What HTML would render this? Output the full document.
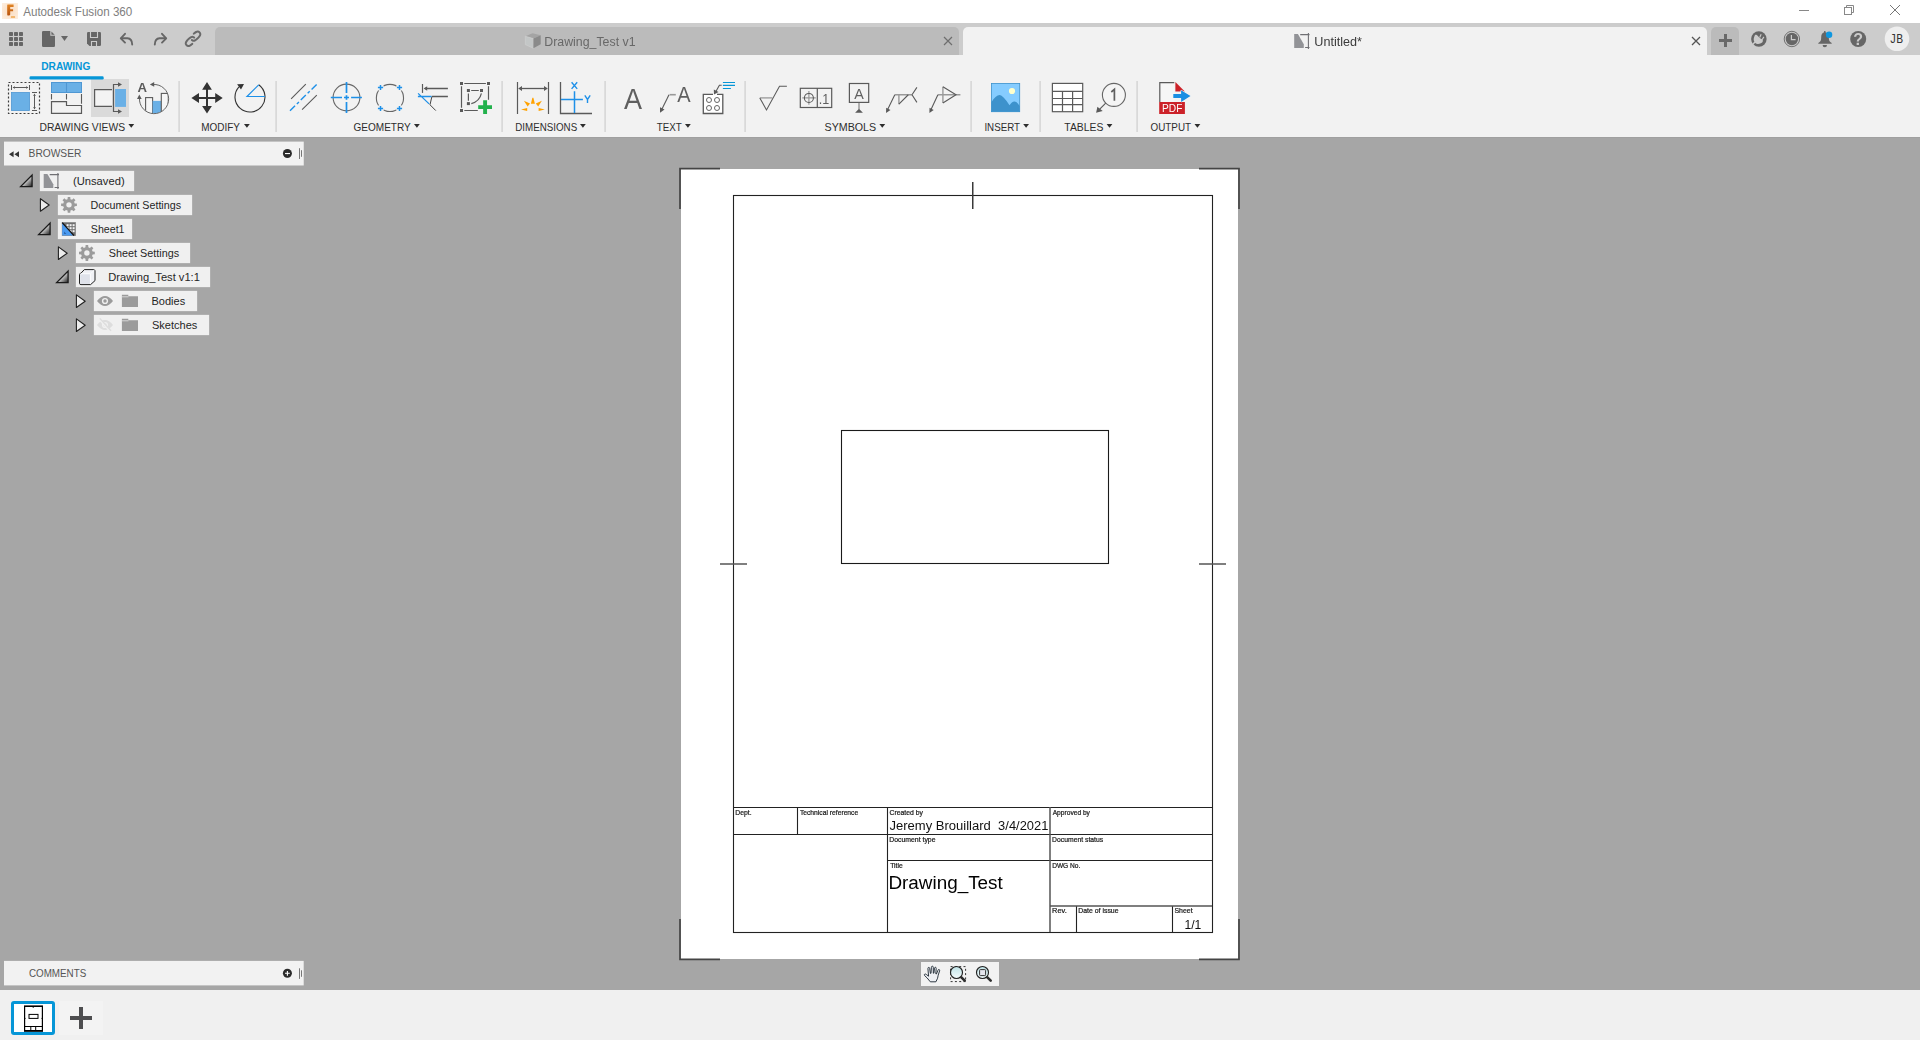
<!DOCTYPE html>
<html><head><meta charset="utf-8"><title>Autodesk Fusion 360</title>
<style>

html,body{margin:0;padding:0;}
body{width:1920px;height:1040px;overflow:hidden;background:#ffffff;position:relative;font-family:"Liberation Sans",sans-serif;}
div{position:absolute;box-sizing:border-box;}
#ov{position:absolute;left:0;top:0;}
#titlebar{left:0;top:0;width:1920px;height:23px;background:#ffffff;}
#tabbar{left:0;top:23px;width:1920px;height:32px;background:#cccccc;}
.tab{top:4px;height:28px;border-radius:5px 5px 0 0;}
#tab1{left:215px;width:744px;background:#bbbbbb;}
#tab2{left:963px;width:744px;background:#f2f2f2;}
#tabplus{left:1711px;width:28px;background:#bbbbbb;}
#avatar{left:1884px;top:4px;width:25px;height:25px;border-radius:50%;background:#f2f2f2;}
#toolbar{left:0;top:55px;width:1920px;height:82px;background:#f2f2f2;}
#tbhl{left:91px;top:24px;width:38px;height:38px;background:#dadada;}
.sep{top:26px;width:2px;height:51px;background:linear-gradient(90deg,#e2e2e2,#d6d6d6);}
#canvas{left:0;top:137px;width:1920px;height:853px;background:#a6a6a6;}
#cshadow{left:0;top:0;width:1920px;height:1px;background:#a0a0a0;}
#sheet{left:681px;top:32px;width:557px;height:790px;background:#ffffff;}
#browser{left:4px;top:5px;width:299px;height:23px;background:#f2f2f2;}
#comments{left:4px;top:824px;width:299px;height:24px;background:#f2f2f2;}
.node{height:20px;background:#f0f0f0;box-shadow:0 0 1px rgba(240,240,240,0.8);}
#navbar{left:921px;top:825px;width:78px;height:24px;background:#f2f2f2;}
#bottombar{left:0;top:990px;width:1920px;height:50px;background:#f0f0f0;}
#thumb{left:11px;top:11px;width:44px;height:34px;border:3px solid #0696d7;border-radius:3px;background:#ffffff;}
#addsheet{left:59px;top:11px;width:44px;height:34px;background:#f3f3f3;}

</style></head>
<body>
<div id="titlebar"></div>
<div id="tabbar"><div class="tab" id="tab1"></div><div class="tab" id="tab2"></div><div class="tab" id="tabplus"></div></div>
<div id="toolbar"><div id="tbhl"></div><div class="sep" style="left:178px"></div><div class="sep" style="left:275px"></div><div class="sep" style="left:501px"></div><div class="sep" style="left:604px"></div><div class="sep" style="left:744px"></div><div class="sep" style="left:970px"></div><div class="sep" style="left:1039px"></div><div class="sep" style="left:1136px"></div></div>
<div id="canvas"><div id="cshadow"></div><div id="sheet"></div><div id="browser"></div><div class="node" style="left:40px;top:34px;width:94px"></div><div class="node" style="left:58px;top:58px;width:134px"></div><div class="node" style="left:58px;top:82px;width:74px"></div><div class="node" style="left:76px;top:106px;width:114px"></div><div class="node" style="left:76px;top:130px;width:134px"></div><div class="node" style="left:94px;top:154px;width:103px"></div><div class="node" style="left:94px;top:178px;width:115px"></div><div id="comments"></div><div id="navbar"></div></div>
<div id="bottombar"><div id="thumb"></div><div id="addsheet"></div></div>

<svg id="ov" width="1920" height="1040" viewBox="0 0 1920 1040">
<g id="sheetlines" fill="none" stroke-linecap="butt">
<path d="M679.2 168.7H720 M680 168V209 M1199 168.7H1239.8 M1239 168V209 M679.2 959.3H720 M680 919V960 M1199 959.3H1239.8 M1239 919V960" stroke="#444444" stroke-width="1.7"/>
<rect x="733.5" y="195.5" width="479" height="737" stroke="#222222" stroke-width="1.1"/>
<path d="M972.75 182V209" stroke="#3a3a3a" stroke-width="1.5"/>
<path d="M720 564H747 M1199 564H1226" stroke="#555555" stroke-width="1.3"/>
<rect x="841.5" y="430.5" width="267" height="133" stroke="#1a1a1a" stroke-width="1.1"/>
<path d="M733 807.5H1212 M733 834.5H1212 M887 860.5H1212 M797.5 807V834 M887.5 807V932 M1076.5 906V932 M1172.5 906V932" stroke="#222222" stroke-width="1.1"/>
<path d="M1050 807V932 M1050 906H1212" stroke="#555555" stroke-width="1.5"/>
</g>
<defs><linearGradient id="gF" x1="0" y1="0" x2="0" y2="1"><stop offset="0" stop-color="#e08424"/><stop offset="1" stop-color="#b8520c"/></linearGradient><linearGradient id="gTri" x1="0" y1="0" x2="1" y2="1"><stop offset="0.42" stop-color="#ececec"/><stop offset="0.95" stop-color="#2e2e2e"/></linearGradient></defs>
<defs><radialGradient id="gLogo" cx="0.5" cy="0.5" r="0.75"><stop offset="0" stop-color="#fbdcbf"/><stop offset="1" stop-color="#fdf0e3"/></radialGradient></defs>
<g id="logo"><rect x="2" y="3" width="16" height="16" fill="url(#gLogo)"/><path d="M7.2 4.8Q7.2 4.4 7.8 4.4H13.6V6.9H10.2V9.2H13.1V11.3H10.2V14.6Q10.2 15.6 8.7 15.6Q7.2 15.6 7.2 14.4Z" fill="url(#gF)"/><rect x="10.9" y="16.2" width="4.2" height="1.6" rx="0.4" fill="#f0a850"/></g>
<g fill="none" stroke="#888888" stroke-width="1"><path d="M1799 10.5H1809"/><rect x="1844.5" y="7.5" width="7" height="7"/><path d="M1846.5 7.5V5.5H1853.5V12.5H1851.5"/><path d="M1890 5L1900 15M1900 5L1890 15" stroke="#777777"/></g>
<g fill="#666666"><rect x="9" y="32" width="4" height="4" rx="0.7"/><rect x="9" y="37" width="4" height="4" rx="0.7"/><rect x="9" y="42" width="4" height="4" rx="0.7"/><rect x="14" y="32" width="4" height="4" rx="0.7"/><rect x="14" y="37" width="4" height="4" rx="0.7"/><rect x="14" y="42" width="4" height="4" rx="0.7"/><rect x="19" y="32" width="4" height="4" rx="0.7"/><rect x="19" y="37" width="4" height="4" rx="0.7"/><rect x="19" y="42" width="4" height="4" rx="0.7"/></g>
<path d="M43.2 31H50.3V35.7H55V45.8a1.2 1.2 0 0 1-1.2 1.2H43.2a1.2 1.2 0 0 1-1.2-1.2V32.2a1.2 1.2 0 0 1 1.2-1.2Z M51.4 31.4L54.7 34.7H51.4Z" fill="#666666"/>
<path d="M61 36H68L64.5 41Z" fill="#666666"/>
<path d="M88.2 32H99.8a1.2 1.2 0 0 1 1.2 1.2V44.8a1.2 1.2 0 0 1-1.2 1.2H89.5L87 43.5V33.2a1.2 1.2 0 0 1 1.2-1.2Z" fill="#666666"/>
<path d="M90.5 32V37.5H97.5V32 M91.5 46V41.5H96.5V46" fill="none" stroke="#cccccc" stroke-width="1.1"/>
<g fill="none" stroke="#666666" stroke-width="1.9" stroke-linecap="round" stroke-linejoin="round"><path d="M125 33.8L120.8 38.3L125 42.6"/><path d="M121.5 38.3H127.5Q132 38.6 132.2 44.5"/><path d="M162 33.8L166.2 38.3L162 42.6"/><path d="M165.5 38.3H159.5Q155 38.6 154.8 44.5"/></g>
<g fill="none" stroke="#6a6a6a" stroke-width="2" stroke-linecap="round"><path d="M193.75 33.70C194.14 33.42 195.39 32.35 196.10 32.00C196.81 31.65 197.40 31.49 198.00 31.60C198.60 31.71 199.32 32.16 199.70 32.65C200.08 33.14 200.42 33.84 200.30 34.55C200.18 35.26 199.57 36.16 199.00 36.90C198.43 37.64 197.60 38.40 196.90 39.00C196.20 39.60 195.43 40.22 194.80 40.50C194.17 40.78 193.59 40.78 193.10 40.70C192.61 40.62 192.06 40.16 191.85 40.05"/><path d="M192.29 43.90C191.90 44.18 190.65 45.25 189.94 45.60C189.23 45.95 188.64 46.11 188.04 46.00C187.44 45.89 186.72 45.44 186.34 44.95C185.96 44.46 185.62 43.76 185.74 43.05C185.86 42.34 186.47 41.44 187.04 40.70C187.61 39.96 188.44 39.20 189.14 38.60C189.84 38.00 190.61 37.38 191.24 37.10C191.87 36.82 192.45 36.82 192.94 36.90C193.43 36.97 193.98 37.44 194.19 37.55"/></g>
<g stroke-linejoin="round"><path d="M525.3 36.2L532.5 33.2L540.7 35.2L533.4 38.6Z" fill="#a4a4a4"/><path d="M525.3 36.2L533.4 38.6V48.3L525.3 44.6Z" fill="#c3c6c6" stroke="#d4d4d4" stroke-width="0.5"/><path d="M533.4 38.6L540.7 35.2V44.2L533.4 48.3Z" fill="#8a8a8a"/></g>
<path d="M944 37L952 45M952 37L944 45" stroke="#6e6e6e" stroke-width="1.2" fill="none"/>
<g transform="translate(1294,33)"><path d="M0.2 1.1H3.9L9.8 11.2V14.9H0.2Z" fill="#929397"/><path d="M6.2 1.6H15.5 M14.4 0V15.9 M11.1 14.5H15.5" fill="none" stroke="#707074" stroke-width="1.1"/></g>
<path d="M1692 37L1700 45M1700 37L1692 45" stroke="#555555" stroke-width="1.3" fill="none"/>
<circle cx="1897" cy="38.7" r="12.3" fill="#eeeeee"/>
<path d="M1725.5 34V47M1719 40.5H1732" stroke="#696969" stroke-width="3" fill="none"/>
<g><circle cx="1758.9" cy="38.9" r="7.75" fill="#666666"/><path d="M1755.29 34.85C1754.88 35.14 1754.54 36.00 1754.27 36.75C1754.00 37.50 1753.69 38.55 1753.69 39.37C1753.69 40.20 1753.95 41.07 1754.27 41.71C1754.59 42.34 1755.02 42.80 1755.58 43.16C1756.14 43.53 1756.85 43.82 1757.62 43.89C1758.40 43.97 1759.50 43.82 1760.25 43.60C1761.00 43.38 1761.71 43.04 1762.14 42.58C1762.58 42.12 1762.85 41.34 1762.87 40.83C1762.90 40.32 1762.63 39.86 1762.29 39.52C1761.95 39.18 1761.29 39.08 1760.83 38.79C1760.37 38.50 1759.98 38.18 1759.52 37.77C1759.06 37.36 1758.52 36.77 1758.06 36.31C1757.60 35.85 1757.21 35.24 1756.75 35.00C1756.29 34.76 1755.70 34.56 1755.29 34.85Z" fill="#cccccc"/><path d="M1759.67 37.39L1761.18 34.36 M1762.06 39.72L1763.89 36.89" stroke="#cccccc" stroke-width="1.15" fill="none"/><path d="M1754.85 41.94L1752.96 44.48" stroke="#cccccc" stroke-width="1.4" fill="none"/></g>
<g><circle cx="1791.9" cy="39" r="7.7" fill="none" stroke="#666666" stroke-width="0.9"/><circle cx="1791.9" cy="39" r="6.2" fill="#666666"/><path d="M1791.4 35V39.6H1795.6" fill="none" stroke="#cccccc" stroke-width="1.2"/></g>
<g fill="#666666"><path d="M1824.1 31h1.4v1.3c2.3 0.5 3.3 2.6 3.3 5.2c0 3 0.7 4.3 2.9 5.6v0.6H1818.3v-0.6c2.2-1.3 2.9-2.6 2.9-5.6c0-2.6 1-4.7 2.9-5.2Z"/><path d="M1822.6 45h4.4a2.2 2.2 0 0 1-4.4 0Z"/></g><circle cx="1829.1" cy="34.8" r="3.2" fill="#0e97e0"/>
<circle cx="1858.2" cy="39" r="8" fill="#666666"/>
<rect x="29.5" y="76.35" width="74.2" height="3.15" rx="1.3" fill="#0696d7"/>
<g fill="none" stroke="#5a5a5a" stroke-width="1"><rect x="8.5" y="82.5" width="31" height="31" stroke="#3c3c3c" stroke-width="1.2" stroke-dasharray="2 2"/><rect x="11.5" y="92.5" width="18" height="18" fill="#6ab0e6" stroke="#4f97d3" stroke-width="0.8"/><path d="M11.5 85V90 M29.5 85V90 M13 87.5H28 M32 92.5H37 M32 110.5H37 M34.5 94V109"/><path d="M12.6 87.5L15 86.2V88.8Z M28.4 87.5L26 86.2V88.8Z M34.5 93.6L33.2 96H35.8Z M34.5 109.4L33.2 107H35.8Z" fill="#5a5a5a" stroke="none"/></g>
<g fill="none" stroke="#5a5a5a" stroke-width="1.1"><rect x="51.5" y="82.5" width="30" height="10" fill="#6ab0e6" stroke="#4f97d3" stroke-width="1"/><path d="M66.5 82.5V92.5" stroke="#4f97d3"/><path d="M51.5 94V99.6 M66.5 94V99.6 M81.5 94V103.8"/><path d="M51.5 101.6H66.5V105.5H81.5V113.4H51.5Z" stroke-width="1.2"/></g>
<g fill="none" stroke="#5a5a5a" stroke-width="1.2"><path d="M112 89.6H94.6V106.4H112" fill="#f3f3f3"/><rect x="115.1" y="89" width="10.9" height="17.9" fill="#6ab0e6" stroke="none"/><path d="M119 84.5H113.5V111.5H119"/><path d="M118 82.3V86.7L122 84.5Z M118 109.3V113.7L122 111.5Z" fill="#5a5a5a" stroke="none"/></g>
<defs><clipPath id="cpc"><circle cx="154" cy="98.9" r="14.5"/></clipPath></defs>
<g><g clip-path="url(#cpc)" stroke="#5a5a5a" stroke-width="1.1"><rect x="145.6" y="97.6" width="7" height="20" fill="#f6f6f6"/><rect x="152.6" y="100.9" width="8.7" height="20" fill="#6ab0e6" stroke="none"/><rect x="161.3" y="93.4" width="7" height="25" fill="#f6f6f6"/></g><path d="M153 84.5A14.6 14.6 0 1 1 139.5 98" fill="none" stroke="#666666" stroke-width="1"/><path d="M149.9 84.4L154.2 82V86.8Z M139.3 94.6L137 99H141.7Z" fill="#5a5a5a"/></g>
<g fill="#333333"><path d="M207 82.1L211.9 89.7H208V96.9H215.2V93L222.7 97.9L215.2 102.9V98.9H208V106H211.9L207 113.5L202.1 106H206V98.9H199V102.9L191.4 97.9L199 93V96.9H206V89.7H202.1Z"/></g>
<g><path d="M258.7 84.8A15 15 0 1 1 239 86.8" fill="none" stroke="#333333" stroke-width="1.1"/><path d="M244 83.9L237.1 84.3L241 89.6Z" fill="#333333"/><path d="M258.7 84.8L247 96.5H265" fill="none" stroke="#1e90e8" stroke-width="1.2"/></g>
<g fill="none"><path d="M291.1 98.9L305.8 84.2 M302.1 109.6L316.8 95.2" stroke="#5a5a5a" stroke-width="1.1"/><path d="M290 110.8L317 84" stroke="#1e90e8" stroke-width="1.4" stroke-dasharray="7.1 2.6 2.9 2.6"/></g>
<g fill="none"><circle cx="346.5" cy="97.5" r="13.4" stroke="#666666" stroke-width="1.1"/><path d="M346.5 82V92.9 M346.5 95.2V99.8 M346.5 102V113 M330.8 97.5H342 M344 97.5H349 M351.1 97.5H361.9" stroke="#1e90e8" stroke-width="1.7"/></g>
<g fill="none"><circle cx="389.95" cy="97.95" r="13.6" stroke="#666666" stroke-width="1.1"/><circle cx="380.5" cy="87.5" r="3.4" fill="#f2f2f2"/><circle cx="380.5" cy="108.5" r="3.4" fill="#f2f2f2"/><circle cx="399.5" cy="87.5" r="3.4" fill="#f2f2f2"/><circle cx="399.5" cy="108.5" r="3.4" fill="#f2f2f2"/><path d="M377.9 87.5H383.1 M380.5 84.9V90.1 M377.9 108.5H383.1 M380.5 105.9V111.1 M396.9 87.5H402.1 M399.5 84.9V90.1 M396.9 108.5H402.1 M399.5 105.9V111.1 " stroke="#1e90e8" stroke-width="1.5"/></g>
<g fill="none"><path d="M422.5 84V92.9" stroke="#5a5a5a" stroke-width="1.2"/><path d="M425 88.5H447.9 M431.9 96.5H447.9" stroke="#5a5a5a" stroke-width="1.3"/><path d="M423.6 88.5L427.2 86.2V90.8Z" fill="#5a5a5a"/><path d="M431.9 96.5L430 104.8L435.8 110.6" stroke="#444444" stroke-width="1"/><path d="M417.9 96.5H431.5 M418.1 93.4L429.1 103.9" stroke="#1e90e8" stroke-width="1.3"/></g>
<g fill="none" stroke="#5a5a5a" stroke-width="1.2"><path d="M464.3 83.5H485.9 M461.5 86.3V107.8 M488.5 86.3V99.8 M464.3 110.5H477.8 M471.2 90.5H478.8 M468.4 93.4V100.7 M481.4 93.4Q479.5 101.5 471.3 103.6"/><g fill="#5a5a5a" stroke="none"><rect x="460.0" y="82.0" width="3" height="3"/><rect x="487.0" y="82.0" width="3" height="3"/><rect x="460.0" y="109.0" width="3" height="3"/><rect x="466.9" y="89.0" width="3" height="3"/><rect x="480.0" y="89.0" width="3" height="3"/><rect x="466.9" y="102.1" width="3" height="3"/></g><path d="M485.1 100.2V114 M478.2 107.1H492" stroke="#22b14c" stroke-width="3.9"/></g>
<g fill="none" stroke="#5a5a5a"><path d="M517.5 82.1V114 M548.5 82.1V114" stroke-width="1.2"/><path d="M520 88.5H546" stroke-width="1.3"/><path d="M518.2 88.5L522 86.1V90.9Z M547.8 88.5L544 86.1V90.9Z" fill="#5a5a5a" stroke="none"/><g fill="#ffa200" stroke="none"><path d="M532.4 97.7H533.4L534.9 103.7H530.9Z"/><path d="M523.9 100.8L530 103.5L527.6 106.6Z"/><path d="M541.9 100.8L535.8 103.5L538.2 106.6Z"/><path d="M521 109.6L527.2 108.1V111.1Z"/><path d="M544.8 109.6L538.6 108.1V111.1Z"/></g></g>
<g fill="none"><path d="M560.5 82.1V113.5H592" stroke="#5a5a5a" stroke-width="1.3"/><path d="M574.5 91.3V113 M561 99.4H582.9" stroke="#1e90e8" stroke-width="1.5"/><path d="M571.6 82.3L577.2 88.9 M577.2 82.3L571.6 88.9 M584.8 95.4L587.5 99.4L590.2 95.4 M587.5 99.4V103" stroke="#1e90e8" stroke-width="1.4"/></g>

<g fill="none"><path d="M669.6 94.7H675.8" stroke="#999999" stroke-width="1.6"/><path d="M661.5 110L669 94.7" stroke="#5a5a5a" stroke-width="1.1"/><path d="M660 112.8L660 107.2L664.5 109.6Z" fill="#5a5a5a"/></g>

<g fill="none" stroke="#5a5a5a"><rect x="703.3" y="94.3" width="19.5" height="19.2" fill="#ffffff" stroke="none"/><path d="M713 94.3H703.3V113.5H722.8V94.3H717" stroke-width="1.3"/><g stroke="#666666" stroke-width="1"><circle cx="709" cy="100" r="2.5"/><circle cx="709" cy="108" r="2.5"/><circle cx="717" cy="100" r="2.5"/><circle cx="717" cy="108" r="2.5"/></g><path d="M721.7 85.3H719.4L715.6 92" stroke-width="1.1"/><path d="M714 94.6L713.8 89.4L718.5 92.1Z" fill="#5a5a5a" stroke="none"/><path d="M722.9 82.5H735 M722.9 85.4H735 M722.9 88.5H730.9" stroke="#0696d7" stroke-width="1.1"/></g>
<g fill="none"><path d="M759.8 97.9H772.3" stroke="#999999" stroke-width="1.3"/><path d="M759.8 97.9L766.5 109.9L779.5 86.3H786.9" stroke="#5a5a5a" stroke-width="1.05"/></g>
<g fill="none"><path d="M802.3 97.9H815.8 M808.9 91.1V104.8" stroke="#999999" stroke-width="1.2"/><circle cx="808.9" cy="97.9" r="4.5" stroke="#5a5a5a" stroke-width="1.05"/><rect x="800.3" y="88.3" width="31.4" height="19.2" stroke="#5a5a5a" stroke-width="1.2"/><path d="M817.3 88.3V107.5" stroke="#5a5a5a" stroke-width="1.2"/></g>

<g fill="none"><path d="M859 102.4V109.3" stroke="#999999" stroke-width="1.5"/><rect x="849.4" y="83.5" width="19.3" height="18.9" stroke="#5a5a5a" stroke-width="1.2"/><path d="M859 108.7L862.9 112.7H855.1Z" fill="#5a5a5a"/></g>

<g fill="none"><path d="M894.8 94.75H912 M898.9 94.75V104.2" stroke="#999999" stroke-width="1.4"/><path d="M887.4 110L894.8 94.75 M912 94.75L916.9 87.4 M912 94.75L916.9 102.4 M898.9 104.2L908.3 94.75" stroke="#5a5a5a" stroke-width="1.1"/><path d="M886 112.9L886.2 107.7L890.5 110.1Z" fill="#5a5a5a"/></g>
<g fill="none"><path d="M937.9 94.75H960.4 M942.9 86.75V103" stroke="#999999" stroke-width="1.4"/><path d="M930.8 110L937.9 94.75 M942.9 86.75L956 94.75L942.9 103" stroke="#5a5a5a" stroke-width="1.1"/><path d="M929.4 112.9L929.5 107.7L933.7 110.1Z" fill="#5a5a5a"/></g>
<g><rect x="991.4" y="83.4" width="28.3" height="28.3" fill="#85ccff" stroke="#3d92cc" stroke-width="0.8"/><path d="M991.4 102.2Q995.5 95 999.8 94.9Q1003 95 1009.5 105.2Q1012 101.2 1014.5 101.4Q1017 101.6 1019.7 106V111.7H991.4Z" fill="#3d92cc"/><circle cx="1012" cy="91" r="3.1" fill="#ffffcc"/></g>
<g fill="none" stroke="#5a5a5a" stroke-width="1.2"><rect x="1052.4" y="83.4" width="30.3" height="28.3" fill="#ffffff"/><path d="M1052.4 91.3H1082.7 M1052.4 98.5H1082.7 M1052.4 104.7H1082.7 M1062.5 91.3V111.7 M1072.6 91.3V111.7"/></g>
<g fill="none"><circle cx="1113.9" cy="94.9" r="11.5" fill="#f5f5f5" stroke="#666666" stroke-width="1.1"/><path d="M1105.7 103.1L1098.5 110.3" stroke="#5a5a5a" stroke-width="1.1"/><path d="M1096.1 112.7L1097.4 106.7L1102.7 111.1Z" fill="#5a5a5a"/></g>
<path d="M1111.3 92L1114.4 89.3V100.8" fill="none" stroke="#5f5f5f" stroke-width="1.7" stroke-linejoin="miter"/>
<g><path d="M1159.5 102V82.5H1174.3V102Z" fill="#f6f6f6"/><path d="M1174.3 82.6H1159.8V102" fill="none" stroke="#5a5a5a" stroke-width="1.2"/><path d="M1175.4 82L1184.8 91.5H1175.4Z" fill="#cc2229"/><rect x="1159.2" y="102" width="25.7" height="12" fill="#cc2229"/><path d="M1173.3 94.1H1181.1V90.2L1190.5 96L1181.1 102V97.9H1173.3Z" fill="#1a8fe3" stroke="#f6f6f6" stroke-width="1" paint-order="stroke"/></g>

<g fill="#2d2d2d"><path d="M128.4 124H134.20000000000002L131.3 127.7Z"/><path d="M244 124H249.8L246.9 127.7Z"/><path d="M414 124H419.8L416.9 127.7Z"/><path d="M580 124H585.8L582.9 127.7Z"/><path d="M685 124H690.8L687.9 127.7Z"/><path d="M879.4 124H885.1999999999999L882.3 127.7Z"/><path d="M1023.2 124H1029.0L1026.1000000000001 127.7Z"/><path d="M1106.6 124H1112.3999999999999L1109.5 127.7Z"/><path d="M1194.5 124H1200.3L1197.4 127.7Z"/></g>
<g font-family="Liberation Sans, sans-serif" style="opacity:0.999"><text transform="translate(623.91,109) scale(0.9227,1)" font-size="29.3" fill="#5f5f5f">A</text><text transform="translate(677.21,101.8) scale(0.9362,1)" font-size="21.4" fill="#5f5f5f">A</text><text transform="translate(818.83,103.7) scale(0.8365,1)" font-size="15" fill="#5f5f5f">.1</text><text transform="translate(854.20,98.8) scale(0.9500,1)" font-size="15.1" fill="#5f5f5f">A</text><text transform="translate(1162.03,112) scale(0.9695,1)" font-size="10.5" fill="#ffffff">PDF</text><text x="137.6" y="91.8" font-weight="bold" font-size="13.2" fill="#5a5a5a">A</text><text x="1858.2" y="44.9" font-weight="bold" font-size="16" fill="#cccccc" text-anchor="middle">?</text></g>
<rect x="4" y="141.6" width="299.75" height="23.9" fill="#f2f2f2"/><rect x="4" y="960.9" width="299.7" height="24.5" fill="#f2f2f2"/>
<path d="M9 154.2L13.6 151.2V157.2Z M14.4 154.2L19 151.2V157.2Z" fill="#333333"/>
<circle cx="287.4" cy="153.5" r="4.5" fill="#2a2a2a"/><rect x="285" y="153" width="5" height="1.1" fill="#ffffff"/>
<path d="M299.5 148.2V159 M301.5 150.2V156.8" stroke="#777777" stroke-width="1" fill="none"/>
<circle cx="287.4" cy="973.3" r="4.5" fill="#2a2a2a"/><path d="M285 973.3H289.8 M287.4 970.9V975.7" stroke="#ffffff" stroke-width="1.1" fill="none"/>
<path d="M299.5 968.3V978.9 M301.5 970.3V976.8" stroke="#777777" stroke-width="1" fill="none"/>
<path d="M20.6 186.6H32.1V175Z" fill="url(#gTri)" stroke="#1a1a1a" stroke-width="1.25" stroke-linejoin="miter"/>
<path d="M40.4 198.7V211.29999999999998L49.2 205.0Z" fill="#ececec" stroke="#222222" stroke-width="1.1" stroke-linejoin="round"/>
<path d="M38.6 234.6H50.1V223Z" fill="url(#gTri)" stroke="#1a1a1a" stroke-width="1.25" stroke-linejoin="miter"/>
<path d="M58.4 246.9V259.5L67.2 253.20000000000002Z" fill="#ececec" stroke="#222222" stroke-width="1.1" stroke-linejoin="round"/>
<path d="M56.6 282.6H68.1V271Z" fill="url(#gTri)" stroke="#1a1a1a" stroke-width="1.25" stroke-linejoin="miter"/>
<path d="M76.4 294.9V307.5L85.2 301.2Z" fill="#ececec" stroke="#222222" stroke-width="1.1" stroke-linejoin="round"/>
<path d="M76.4 318.9V331.5L85.2 325.2Z" fill="#ececec" stroke="#222222" stroke-width="1.1" stroke-linejoin="round"/>
<g transform="translate(43.5,173)"><path d="M0.2 1.1H3.9L9.8 11.2V14.9H0.2Z" fill="#929397"/><path d="M6.2 1.6H15.5 M14.4 0V15.9 M11.1 14.5H15.5" fill="none" stroke="#707074" stroke-width="1.1"/></g>
<path d="M67.54 199.13L67.73 196.95L70.27 196.95L70.46 199.13L72.01 199.78L73.68 198.36L75.49 200.17L74.07 201.84L74.72 203.39L76.90 203.58L76.90 206.12L74.72 206.31L74.07 207.86L75.49 209.53L73.68 211.34L72.01 209.92L70.46 210.57L70.27 212.75L67.73 212.75L67.54 210.57L65.99 209.92L64.32 211.34L62.51 209.53L63.93 207.86L63.28 206.31L61.10 206.12L61.10 203.58L63.28 203.39L63.93 201.84L62.51 200.17L64.32 198.36L65.99 199.78Z M66.3 204.85a2.7 2.7 0 1 0 5.4 0a2.7 2.7 0 1 0-5.4 0Z" fill="#9b9b9b" fill-rule="evenodd"/>
<path d="M85.44 247.28L85.63 245.10L88.17 245.10L88.36 247.28L89.91 247.93L91.58 246.51L93.39 248.32L91.97 249.99L92.62 251.54L94.80 251.73L94.80 254.27L92.62 254.46L91.97 256.01L93.39 257.68L91.58 259.49L89.91 258.07L88.36 258.72L88.17 260.90L85.63 260.90L85.44 258.72L83.89 258.07L82.22 259.49L80.41 257.68L81.83 256.01L81.18 254.46L79.00 254.27L79.00 251.73L81.18 251.54L81.83 249.99L80.41 248.32L82.22 246.51L83.89 247.93Z M84.2 253a2.7 2.7 0 1 0 5.4 0a2.7 2.7 0 1 0-5.4 0Z" fill="#9b9b9b" fill-rule="evenodd"/>
<g><rect x="62.3" y="222.6" width="13.2" height="12.9" fill="#6e6e6e" stroke="#8c8c8c" stroke-width="0.9"/><rect x="66.6" y="224.2" width="2" height="2" fill="#f4f4f4"/><rect x="66.6" y="227.2" width="2" height="2" fill="#f4f4f4"/><rect x="66.6" y="230.2" width="2" height="2" fill="#f4f4f4"/><rect x="69.6" y="224.2" width="2" height="2" fill="#f4f4f4"/><rect x="69.6" y="227.2" width="2" height="2" fill="#f4f4f4"/><rect x="69.6" y="230.2" width="2" height="2" fill="#f4f4f4"/><rect x="72.6" y="224.2" width="2" height="2" fill="#f4f4f4"/><rect x="72.6" y="227.2" width="2" height="2" fill="#f4f4f4"/><rect x="72.6" y="230.2" width="2" height="2" fill="#f4f4f4"/><path d="M62.2 223V235.6H73Z" fill="#4a9af0"/><path d="M62.2 222.6L74 235.6" stroke="#111111" stroke-width="1.3"/><path d="M64.2 231.4L66.3 233.9H64.2Z" fill="#2c5fa0"/></g>
<g stroke-linejoin="round"><path d="M79.5 274.6Q79.5 273.2 81 273.2L84.3 269.6H93.8Q95 269.6 95 270.9V280.6L90.6 284.6H81Q79.5 284.6 79.5 283.2Z" fill="#f0f1f5" stroke="#222222" stroke-width="1"/><path d="M80.3 274V283.8H90V274Z" fill="#dfe2ea"/><path d="M80.3 273.8H90.4V284" fill="none" stroke="#ffffff" stroke-width="0.8"/><path d="M90.6 273.6L94.6 270" stroke="#ffffff" stroke-width="0.8"/></g>
<path d="M97 301Q101 296 105 296Q109 296 113 301Q109 306 105 306Q101 306 97 301Z" fill="#9b9b9b"/><circle cx="105" cy="301" r="3.1" fill="#f0f0f0"/><circle cx="105" cy="301" r="1.7" fill="#9b9b9b"/>
<path d="M121.9 294.7H128.3V296.2H138.0V307.0H121.9Z" fill="#9b9b9b"/><path d="M121.9 296.8H128.5" stroke="#e4e4e4" stroke-width="0.8"/>
<g opacity="0.42"><path d="M97 325Q101 320 105 320Q109 320 113 325Q109 330 105 330Q101 330 97 325Z" fill="#c4c4c4"/><circle cx="105" cy="325" r="3.1" fill="#f0f0f0"/><circle cx="105" cy="325" r="1.7" fill="#c4c4c4"/><path d="M99 318.6L110.5 331.2" stroke="#f0f0f0" stroke-width="2.4"/><path d="M99.8 318.4L111 330.8" stroke="#c4c4c4" stroke-width="1.3"/></g>
<path d="M121.9 318.7H128.3V320.2H138.0V331.0H121.9Z" fill="#9b9b9b"/><path d="M121.9 320.8H128.5" stroke="#e4e4e4" stroke-width="0.8"/>
<defs><linearGradient id="gLens" x1="0" y1="0" x2="0" y2="1"><stop offset="0" stop-color="#bfe2e6"/><stop offset="1" stop-color="#f4fbfc"/></linearGradient></defs>
<g transform="translate(924,966.2)"><path d="M6.3 15.6L3.2 11.8L0.6 9.4Q-0.1 8.4 0.8 7.9Q1.6 7.6 2.4 8.3L4.6 10L3.9 2.4Q3.9 1.2 4.8 1.2Q5.6 1.2 5.7 2.3L6.4 7.2L7 7.1L7.4 1.1Q7.5 0 8.4 0Q9.3 0 9.3 1.2L9.3 7L9.9 7L10.5 2Q10.7 1 11.5 1.1Q12.3 1.2 12.2 2.3L11.8 7.6L12.4 7.8L14 4Q14.5 3 15.2 3.3Q15.9 3.7 15.6 4.7L14.2 9L13.6 12L11.9 15.6Z" fill="#eef0f4" stroke="#1a2530" stroke-width="0.9" stroke-linejoin="round"/></g>
<g fill="none"><rect x="950.6" y="966.6" width="15" height="15" stroke="#333333" stroke-width="1" stroke-dasharray="2 2.3"/><path d="M961.4 977.4L964.7 980.7" stroke="#2e2e2e" stroke-width="2.6" stroke-linecap="round"/><circle cx="956.5" cy="972.5" r="6" fill="url(#gLens)" stroke="#222222" stroke-width="1.15"/></g>
<g fill="none"><path d="M987.4 977.4L990.7 980.7" stroke="#2e2e2e" stroke-width="2.6" stroke-linecap="round"/><circle cx="982.5" cy="972.5" r="6" fill="url(#gLens)" stroke="#222222" stroke-width="1.15"/><rect x="979.6" y="969.6" width="6" height="6" rx="0.8" fill="#e6e6ee" stroke="#333333" stroke-width="1"/></g>
<g fill="none" stroke="#000000"><rect x="24.6" y="1006.4" width="17.8" height="24.4" stroke-width="1.2"/><path d="M24 1006.3H43 M24 1030.9H43" stroke-width="1.6"/><rect x="29" y="1014.4" width="9" height="4" stroke-width="1"/><path d="M24.6 1026.5H42.4 M30.8 1026.5V1030.5 M35.7 1026.5V1030.5 M24 1018.4H25.5 M41.5 1018.4H43 M33.2 1006.5V1007.8" stroke-width="1"/></g>
<path d="M81 1007V1029 M70 1018H92" stroke="#4d4d4f" stroke-width="4" fill="none"/>
<g font-family="Liberation Sans, sans-serif">
<text transform="translate(23.20,16.00) scale(0.9688,1)" font-size="12" fill="#808080">Autodesk Fusion 360</text>
<text transform="translate(544.27,45.60) scale(1.0299,1)" font-size="12" fill="#686868">Drawing_Test v1</text>
<text transform="translate(1314.35,45.60) scale(1.0519,1)" font-size="12" fill="#3a3a3a">Untitled*</text>
<text transform="translate(41.25,70.00) scale(0.9247,1)" font-size="11" fill="#0696d7" font-weight="bold">DRAWING</text>
<text transform="translate(39.45,131.00) scale(0.9399,1)" font-size="11" fill="#2d2d2d">DRAWING VIEWS</text>
<text transform="translate(201.18,131.00) scale(0.9062,1)" font-size="11" fill="#2d2d2d">MODIFY</text>
<text transform="translate(353.54,131.00) scale(0.9129,1)" font-size="11" fill="#2d2d2d">GEOMETRY</text>
<text transform="translate(515.20,131.00) scale(0.8900,1)" font-size="11" fill="#2d2d2d">DIMENSIONS</text>
<text transform="translate(656.82,131.00) scale(0.8917,1)" font-size="11" fill="#2d2d2d">TEXT</text>
<text transform="translate(824.51,131.00) scale(0.9712,1)" font-size="11" fill="#2d2d2d">SYMBOLS</text>
<text transform="translate(984.41,131.00) scale(0.8869,1)" font-size="11" fill="#2d2d2d">INSERT</text>
<text transform="translate(1064.31,131.00) scale(0.9433,1)" font-size="11" fill="#2d2d2d">TABLES</text>
<text transform="translate(1150.55,131.00) scale(0.8966,1)" font-size="11" fill="#2d2d2d">OUTPUT</text>
<text transform="translate(28.56,157.00) scale(0.9314,1)" font-size="11" fill="#555555">BROWSER</text>
<text transform="translate(28.95,977.00) scale(0.8938,1)" font-size="11" fill="#555555">COMMENTS</text>
<text transform="translate(72.99,185.00) scale(1.0182,1)" font-size="11" fill="#262626">(Unsaved)</text>
<text transform="translate(90.42,209.00) scale(0.9760,1)" font-size="11" fill="#262626">Document Settings</text>
<text transform="translate(90.82,233.00) scale(0.9675,1)" font-size="11" fill="#262626">Sheet1</text>
<text transform="translate(108.71,257.00) scale(0.9844,1)" font-size="11" fill="#262626">Sheet Settings</text>
<text transform="translate(108.29,281.00) scale(1.0135,1)" font-size="11" fill="#262626">Drawing_Test v1:1</text>
<text transform="translate(151.50,305.00) scale(1.0000,1)" font-size="11" fill="#262626">Bodies</text>
<text transform="translate(151.90,329.00) scale(1.0045,1)" font-size="11" fill="#262626">Sketches</text>
</g>
<text transform="translate(1889.45,42.8) scale(0.9462,1)" font-family="Liberation Mono, monospace" font-size="12" fill="#333333">JB</text>
<g font-family="Liberation Sans, sans-serif" style="opacity:0.999">
<text transform="translate(735.21,815.00) scale(0.9806,1)" font-size="7" fill="#1a1a1a" stroke="#1a1a1a" stroke-width="0.22">Dept.</text>
<text transform="translate(799.90,815.00) scale(0.9619,1)" font-size="7" fill="#1a1a1a" stroke="#1a1a1a" stroke-width="0.22">Technical reference</text>
<text transform="translate(889.51,815.00) scale(0.9794,1)" font-size="7" fill="#1a1a1a" stroke="#1a1a1a" stroke-width="0.22">Created by</text>
<text transform="translate(1052.70,815.00) scale(0.9491,1)" font-size="7" fill="#1a1a1a" stroke="#1a1a1a" stroke-width="0.22">Approved by</text>
<text transform="translate(889.21,842.00) scale(0.9848,1)" font-size="7" fill="#1a1a1a" stroke="#1a1a1a" stroke-width="0.22">Document type</text>
<text transform="translate(1052.12,842.00) scale(0.9729,1)" font-size="7" fill="#1a1a1a" stroke="#1a1a1a" stroke-width="0.22">Document status</text>
<text transform="translate(890.20,868.00) scale(0.9683,1)" font-size="7" fill="#1a1a1a" stroke="#1a1a1a" stroke-width="0.22">Title</text>
<text transform="translate(1052.13,868.00) scale(0.9443,1)" font-size="7" fill="#1a1a1a" stroke="#1a1a1a" stroke-width="0.22">DWG No.</text>
<text transform="translate(1052.07,913.00) scale(1.0556,1)" font-size="7" fill="#1a1a1a" stroke="#1a1a1a" stroke-width="0.22">Rev.</text>
<text transform="translate(1078.31,913.00) scale(0.9850,1)" font-size="7" fill="#1a1a1a" stroke="#1a1a1a" stroke-width="0.22">Date of issue</text>
<text transform="translate(1174.50,913.00) scale(0.9889,1)" font-size="7" fill="#1a1a1a" stroke="#1a1a1a" stroke-width="0.22">Sheet</text>
<text transform="translate(889.41,829.80) scale(0.9663,1)" font-size="13.5" fill="#111111">Jeremy Brouillard</text>
<text transform="translate(998.12,829.80) scale(0.9572,1)" font-size="13.5" fill="#111111">3/4/2021</text>
<text transform="translate(888.43,889.00) scale(0.9843,1)" font-size="19.2" fill="#000000">Drawing_Test</text>
<text transform="translate(1184.40,929.00) scale(0.9012,1)" font-size="13.5" fill="#111111">1/1</text>
</g>

</svg>
</body></html>
